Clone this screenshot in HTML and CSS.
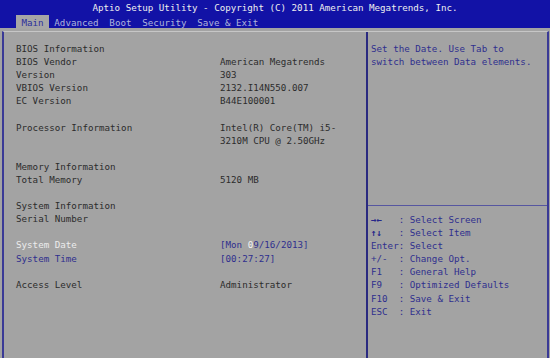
FILE: index.html
```html
<!DOCTYPE html>
<html lang="en">

<head>
    <meta charset="UTF-8">
    <meta name="viewport" content="width=device-width, initial-scale=1.0">
    <title>Aptio Setup Utility</title>

    <link rel="stylesheet" href="styles.css">
</head>

<body>
    <div class="ust">
        <div class="baslik">Aptio Setup Utility - Copyright (C) 2011 American Megatrends, Inc.</div>
        <div class="sekmeler">
            <span class="sekme aktif">Main</span>
            <span class="sekme">Advanced</span>
            <span class="sekme">Boot</span>
            <span class="sekme">Security</span>
            <span class="sekme">Save &amp; Exit</span>
        </div>
    </div>

    <div class="govde">
        <div class="cerceve">
            <div class="sol">
                <div class="satir"><span class="etiket">BIOS Information</span></div>
                <div class="satir"><span class="etiket">BIOS Vendor</span><span>American Megatrends</span></div>
                <div class="satir"><span class="etiket">Version</span><span>303</span></div>
                <div class="satir"><span class="etiket">VBIOS Version</span><span>2132.I14N550.007</span></div>
                <div class="satir"><span class="etiket">EC Version</span><span>B44E100001</span></div>
                <div class="bos"></div>
                <div class="satir"><span class="etiket">Processor Information</span><span>Intel(R) Core(TM) i5-<br>3210M CPU @ 2.50GHz</span></div>
                <div class="bos"></div>
                <div class="satir"><span class="etiket">Memory Information</span></div>
                <div class="satir"><span class="etiket">Total Memory</span><span>5120 MB</span></div>
                <div class="bos"></div>
                <div class="satir"><span class="etiket">System Information</span></div>
                <div class="satir"><span class="etiket">Serial Number</span></div>
                <div class="bos"></div>
                <div class="satir"><span class="etiket secili">System Date</span><span class="mavi">[Mon <span class="imlec">0</span>9/16/2013]</span></div>
                <div class="satir"><span class="etiket mavi">System Time</span><span class="mavi">[00:27:27]</span></div>
                <div class="bos"></div>
                <div class="satir"><span class="etiket">Access Level</span><span>Administrator</span></div>
            </div>

            <div class="sag">
                <div class="yardim">Set the Date. Use Tab to<br>switch between Data elements.</div>
                <div class="tuslar">
                    <div class="tus"><b class="ok">→←</b>   : Select Screen</div>
                    <div class="tus"><b class="ok">↑↓</b>   : Select Item</div>
                    <div class="tus">Enter: Select</div>
                    <div class="tus">+/-  : Change Opt.</div>
                    <div class="tus">F1   : General Help</div>
                    <div class="tus">F9   : Optimized Defaults</div>
                    <div class="tus">F10  : Save &amp; Exit</div>
                    <div class="tus">ESC  : Exit</div>
                </div>
            </div>
        </div>
    </div>
</body>

</html>
```

FILE: styles.css
```css
body {
    margin: 0;
    width: 550px;
    height: 358px;
    overflow: hidden;
    background-color: #a3a3a3;
    font-family: "DejaVu Sans Mono", "Liberation Mono", monospace;
    font-size: 9.2px;
    color: #2c2c2c;
}

.ust {
    background-color: #1212a6;
    height: 28px;
}

.baslik {
    color: #eeeeee;
    text-align: center;
    line-height: 14px;
    padding-top: 1px;
    height: 13px;
}

.sekmeler {
    display: flex;
    padding-left: 16px;
    height: 14px;
    padding-top: 1px;
}

.sekme {
    padding: 2px 5.4px 0;
    line-height: 12px;
    color: #aeb4dc;
}

.aktif {
    background-color: #a6a6a6;
    color: #2b2f9c;
}

.govde {
    padding: 3px 1px 0 2px;
}

.cerceve {
    display: grid;
    grid-template-columns: 1fr 181px;
    border-top: 1px solid #c6c6c6;
    border-left: 2px solid #3a3a96;
    border-right: 2px solid #3a3a96;
    height: 340px;
}

.sol {
    padding: 10px 0 0 12px;
    line-height: 13.1px;
}

.satir {
    display: flex;
}

.etiket {
    width: 204px;
    flex-shrink: 0;
}

.bos {
    height: 13.1px;
}

.mavi {
    color: #2f2f8e;
}

.secili {
    color: #ececec;
}

.imlec {
    color: #f4f4f4;
}

.sag {
    border-left: 2px solid #2a2a80;
    color: #2f2f8e;
    line-height: 13.1px;
}

.yardim {
    height: 163px;
    padding: 10px 0 0 3px;
    border-bottom: 1px solid #5656a0;
}

.tuslar {
    padding: 7px 0 0 3px;
}

.tus {
    white-space: pre;
}

.ok {
    font-weight: bold;
    color: #26268a;
}
```
